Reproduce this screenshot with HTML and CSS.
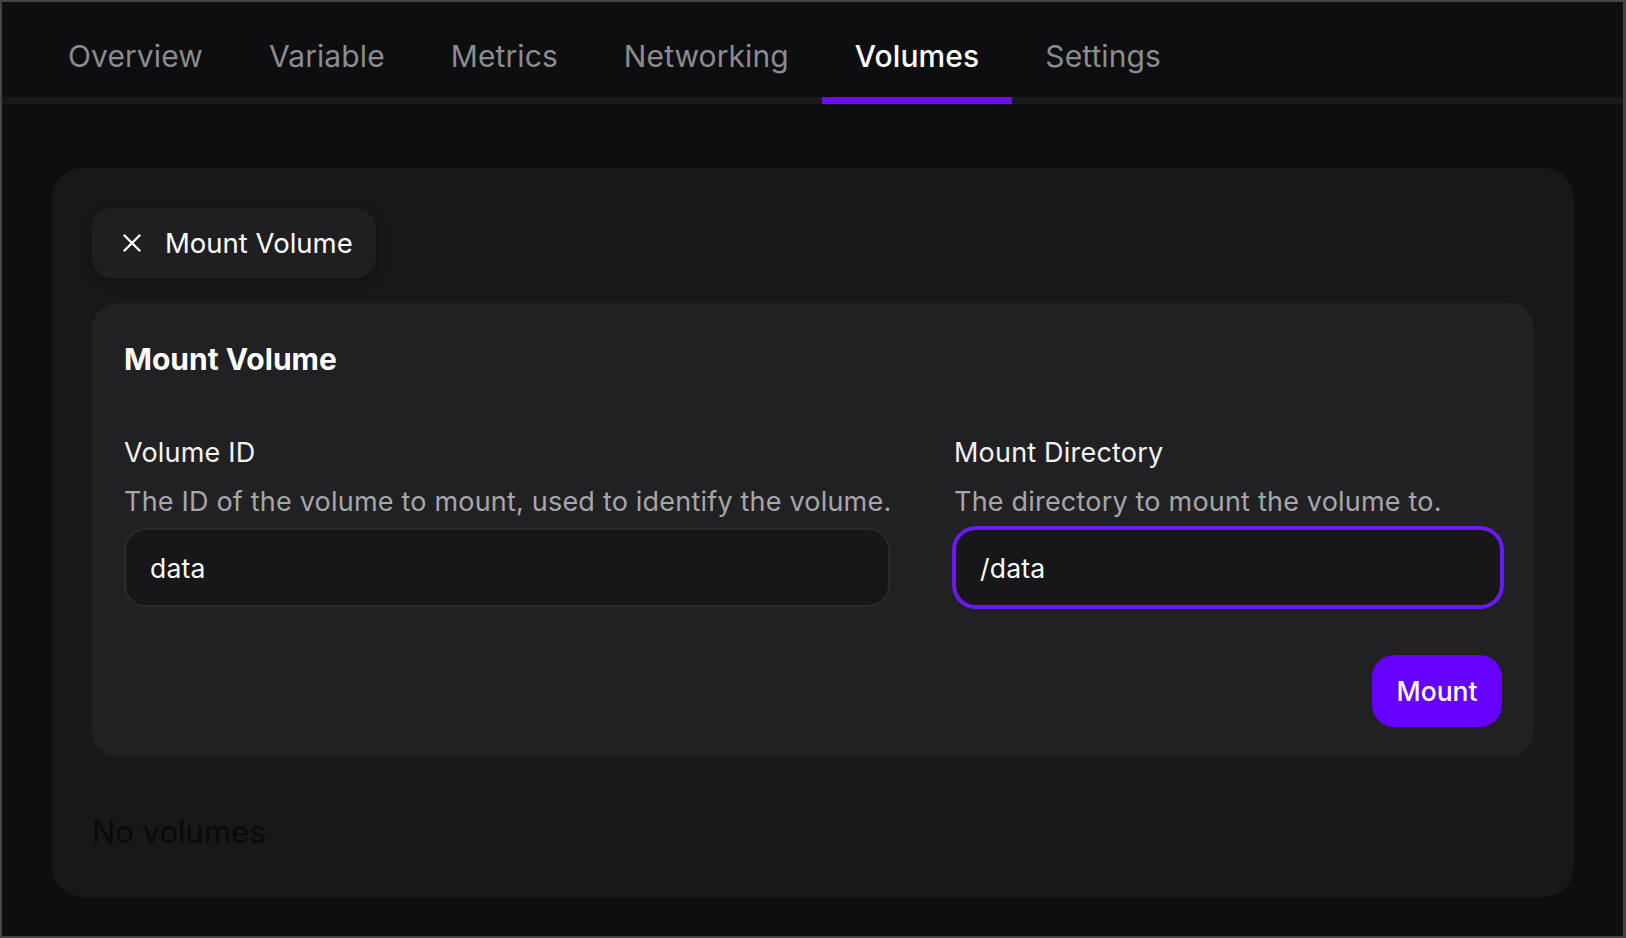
FILE: index.html
```html
<!DOCTYPE html>
<html lang="en">
<head>
<meta charset="utf-8">
<title>Volumes</title>
<link rel="stylesheet" href="styles.css">
</head>
<body>
<div class="frame">
  <nav class="tabs">
    <div class="tab">Overview</div>
    <div class="tab">Variable</div>
    <div class="tab">Metrics</div>
    <div class="tab">Networking</div>
    <div class="tab active">Volumes</div>
    <div class="tab">Settings</div>
  </nav>
  <main class="main">
    <section class="card">
      <button class="chip" type="button">
        <svg class="chip-icon" width="20" height="18" viewBox="0 0 20 18" aria-hidden="true">
          <path d="M2.5 1.5 L17.5 16.5 M17.5 1.5 L2.5 16.5" stroke="#ffffff" stroke-width="2.4" stroke-linecap="round" fill="none"/>
        </svg>
        <span>Mount Volume</span>
      </button>
      <div class="panel">
        <h2 class="panel-title">Mount Volume</h2>
        <div class="fields">
          <div class="field">
            <div class="label">Volume ID</div>
            <div class="desc">The ID of the volume to mount, used to identify the volume.</div>
            <div class="input">data</div>
          </div>
          <div class="field">
            <div class="label">Mount Directory</div>
            <div class="desc">The directory to mount the volume to.</div>
            <div class="input focused">/data</div>
          </div>
        </div>
        <div class="actions">
          <button class="btn" type="button">Mount</button>
        </div>
      </div>
      <p class="empty">No volumes</p>
    </section>
  </main>
</div>
</body>
</html>
```

FILE: styles.css
```css
* { box-sizing: border-box; }

html, body {
  margin: 0;
  padding: 0;
  background: #0e0e10;
}

body {
  font-family: Inter, "Noto Sans", "Liberation Sans", sans-serif;
  color: #f2f2f3;
}

.frame {
  height: 938px;
  border: 2px solid #444446;
  border-right-width: 3px;
  background: #0e0e10;
  display: flex;
  flex-direction: column;
}

.tabs {
  display: flex;
  height: 102px;
  padding-left: 33px;
  border-bottom: 7px solid #19191c;
  flex-shrink: 0;
}

.tab {
  position: relative;
  padding: 36px 33px 0;
  font-size: 30px;
  line-height: 36px;
  color: #8b8b91;
  letter-spacing: 0.1px;
}

.tab.active {
  color: #ffffff;
  font-weight: 500;
}

.tab.active::after {
  content: "";
  position: absolute;
  left: 0;
  right: 0;
  bottom: -7px;
  height: 7px;
  background: #6a0dff;
}

.main {
  padding: 64px 49px 0 50px;
}

.card {
  background: #18181a;
  border-radius: 30px;
  padding: 40px 40px 47px;
}

.chip {
  display: inline-flex;
  align-items: center;
  gap: 23px;
  height: 70px;
  padding: 0 23px 0 30px;
  border: none;
  border-radius: 20px;
  background: #1f1f22;
  box-shadow: 0 3px 10px rgba(0, 0, 0, 0.25);
  color: #ffffff;
  font-family: inherit;
  font-size: 27.5px;
  cursor: pointer;
}

.chip-icon { display: block; }

.panel {
  margin-top: 25px;
  background: #212124;
  border-radius: 26px;
  padding: 39px 32px 30px;
}

.panel-title {
  margin: 0;
  font-size: 30px;
  line-height: 35px;
  font-weight: 700;
  color: #ffffff;
}

.fields {
  margin-top: 60px;
  display: grid;
  grid-template-columns: 766px 1fr;
  column-gap: 64px;
}

.label {
  font-size: 27px;
  line-height: 32.5px;
  letter-spacing: 0.2px;
  color: #f4f4f5;
}

.desc {
  margin-top: 16px;
  font-size: 27px;
  line-height: 32.5px;
  letter-spacing: 0.2px;
  color: #a6a6ab;
  white-space: nowrap;
}

.input {
  margin-top: 10px;
  height: 79px;
  display: flex;
  align-items: center;
  padding: 0 24px;
  background: #17171a;
  border: 2px solid #2b2b2e;
  border-radius: 22px;
  font-size: 26.5px;
  letter-spacing: 0.2px;
  color: #ffffff;
}

.input.focused {
  border-color: #6a1af4;
  box-shadow: 0 0 0 2px #6a1af4;
}

.actions {
  margin-top: 48px;
  display: flex;
  justify-content: flex-end;
}

.btn {
  width: 130px;
  height: 72px;
  border: none;
  border-radius: 22px;
  background: #6600ff;
  color: #ffffff;
  font-family: inherit;
  font-size: 26.5px;
  font-weight: 500;
  cursor: pointer;
}

.empty {
  margin: 57px 0 0;
  font-size: 31px;
  line-height: 36px;
  color: #0a0a0b;
}
```
